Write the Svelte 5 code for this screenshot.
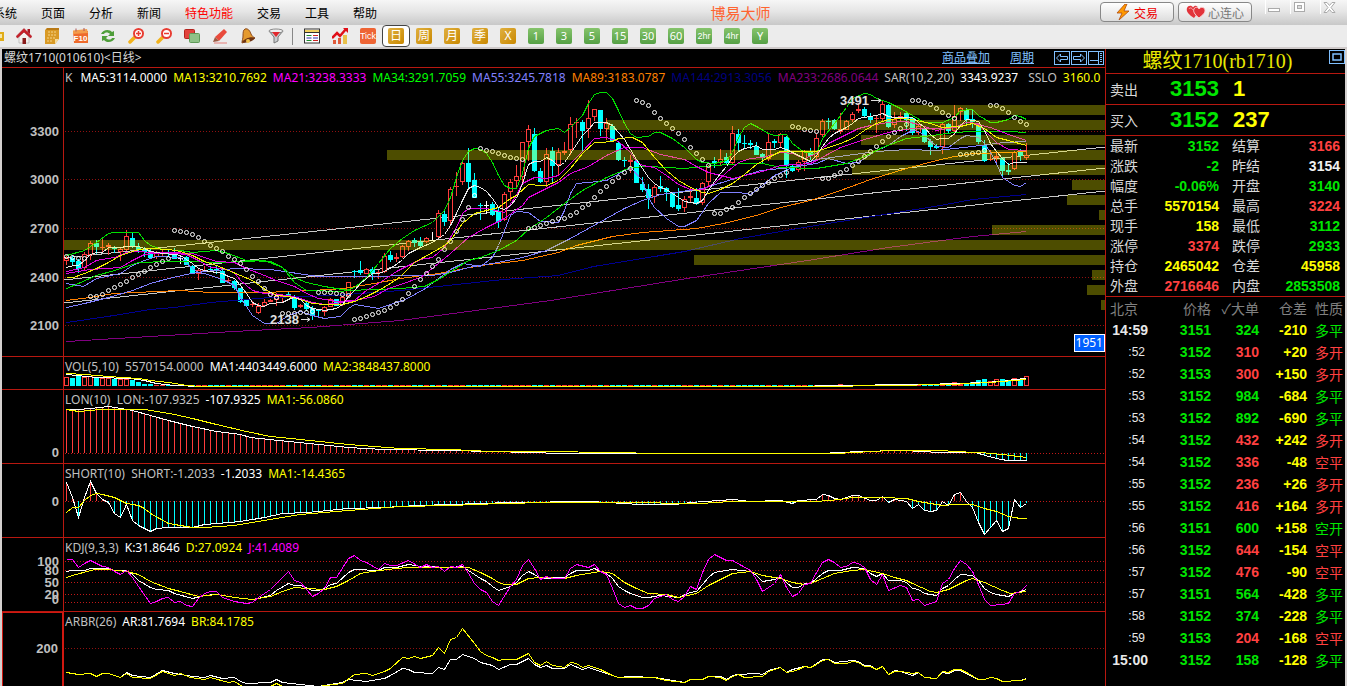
<script>
  const menus = ['系统', '页面', '分析', '新闻', '特色功能', '交易', '工具', '帮助'];
  const periods = [
    ['日', 'gold'], ['周', 'gold'], ['月', 'gold'], ['季', 'gold'], ['X', 'gold'],
    ['1', 'green'], ['3', 'green'], ['5', 'green'], ['15', 'green'], ['30', 'green'],
    ['60', 'green'], ['2hr', 'green'], ['4hr', 'green'], ['Y', 'green']
  ];

  const mainLegend = [
    ['K', '#c0c0c0'], ['MA5:3114.0000', '#fff'], ['MA13:3210.7692', '#ff0'], ['MA21:3238.3333', '#f0f'],
    ['MA34:3291.7059', '#0f0'], ['MA55:3245.7818', '#8080ff'], ['MA89:3183.0787', '#ff8000'],
    ['MA144:2913.3056', '#000080'], ['MA233:2686.0644', '#800080'], ['SAR(10,2,20)', '#c0c0c0'],
    ['3343.9237', '#fff'], ['SSLO', '#c0c0c0'], ['3160.0', '#ff0']
  ];

  const quotes = [
    ['最新', '3152', 'g', '结算', '3166', 'r'],
    ['涨跌', '-2', 'g', '昨结', '3154', 'w'],
    ['幅度', '-0.06%', 'g', '开盘', '3140', 'g'],
    ['总手', '5570154', 'y', '最高', '3224', 'r'],
    ['现手', '158', 'y', '最低', '3112', 'g'],
    ['涨停', '3374', 'r', '跌停', '2933', 'g'],
    ['持仓', '2465042', 'y', '仓差', '45958', 'y'],
    ['外盘', '2716646', 'r', '内盘', '2853508', 'g']
  ];

  const ticks = [
    ['14:59', '3151', '324', 'g', '-210', '多平', 'g'],
    [':52', '3152', '310', 'r', '+20', '多开', 'r'],
    [':52', '3153', '300', 'r', '+150', '多开', 'r'],
    [':53', '3152', '984', 'g', '-684', '多平', 'g'],
    [':53', '3152', '892', 'g', '-690', '多平', 'g'],
    [':54', '3152', '432', 'r', '+242', '多开', 'r'],
    [':54', '3152', '336', 'r', '-48', '空平', 'r'],
    [':55', '3152', '236', 'r', '+26', '多开', 'r'],
    [':55', '3152', '416', 'r', '+164', '多开', 'r'],
    [':56', '3151', '600', 'g', '+158', '空开', 'g'],
    [':56', '3152', '644', 'r', '-154', '空平', 'r'],
    [':57', '3152', '476', 'r', '-90', '空平', 'r'],
    [':57', '3151', '564', 'g', '-428', '多平', 'g'],
    [':58', '3152', '374', 'g', '-228', '多平', 'g'],
    [':59', '3153', '204', 'r', '-168', '空平', 'r'],
    ['15:00', '3152', '158', 'g', '-128', '多平', 'g']
  ];

  // One candle per entry: kind, body top, body bottom, high, low.
  const candles = `r198,201,195,205 c198,202,195,206 c201,209,199,213 r194,208,192,210 r183,195,181,200 c183,187,180,194
r187,188,178,192 r185,187,183,195 c187,189,186,193 r189,192,187,201 r176,190,170,191 c178,187,172,188 c187,190,183,193
c190,192,187,197 c191,198,189,198 r192,197,191,199 r193,194,190,196 c192,194,190,197 c193,199,188,199 w198,199,196,204
c197,205,196,205 c206,214,205,214 r210,214,208,220 r210,211,206,212 c209,210,206,212 c209,211,206,214 c211,223,210,223
r220,221,218,223 c221,228,220,230 c228,242,228,243 c240,246,239,247 r244,245,241,247 r246,253,243,254 r242,246,239,247
r240,242,239,242 r236,240,233,246 r236,237,235,243 c234,236,231,237 c236,248,235,250 r245,247,244,248 c243,249,242,251
c248,256,246,260 c250,251,249,257 r247,252,246,256 r239,247,238,247 c239,246,239,246 r237,245,236,246 r222,236,222,237
c211,212,210,218 c210,213,201,215 r209,214,208,214 c209,214,207,220 r212,213,210,219 r196,212,193,213 c195,200,191,202
r197,199,193,202 r186,197,185,198 r181,187,180,191 c180,183,178,187 c182,186,177,187 r178,182,177,183 w180,181,172,181
r153,177,150,179 c154,162,149,166 r129,161,127,164 r126,127,112,136 r103,122,101,125 c103,122,88,129 c120,138,113,138
c145,146,143,160 w145,146,141,154 c144,155,142,156 c152,162,147,168 r134,160,132,161 r122,132,119,141 r116,121,105,127
r82,117,82,124 r69,82,65,101 c74,111,68,112 c111,122,108,123 r94,122,88,127 c91,106,87,122 r92,105,88,116 r91,93,82,95
r64,90,57,95 r62,63,58,78 c62,71,60,91 r58,69,40,78 r49,57,49,61 c50,69,50,76 r63,69,58,80 c66,81,64,82 c83,100,82,101
c100,101,97,107 r100,102,95,113 c101,123,100,123 c124,130,117,132 c129,138,124,149 r127,137,125,143 c126,129,116,132
c128,132,127,141 c132,147,132,148 c145,149,128,151 r139,148,136,152 r136,138,128,142 c138,144,128,145 r123,143,122,145
r106,122,105,127 c101,103,97,108 r99,103,89,106 c97,103,93,104 r73,103,66,104 c74,83,69,91 c83,84,75,88 c83,85,80,89
c86,95,82,95 c94,98,93,104 r82,99,74,101 c81,83,79,88 r74,83,73,87 c77,106,76,118 c106,111,105,112 r102,110,100,112
r91,102,90,111 c92,96,88,100 r78,97,74,99 r61,75,59,77 c61,62,58,69 c60,69,59,70 r69,72,53,74 r61,70,60,70 r54,60,52,62
r49,51,43,53 c49,56,47,57 c57,60,53,63 r58,59,55,73 r44,59,40,62 c45,67,44,68 r59,65,52,68 r56,57,52,62 c53,60,53,71
c58,73,57,75 r66,73,64,75 c68,82,66,83 c81,87,79,95 c86,88,84,89 r64,87,63,94 c64,71,63,74 r56,71,45,75 r48,52,47,61
c50,60,48,65 c59,62,49,68 c66,82,65,84 c85,101,80,102 r99,100,90,101 r96,98,92,104 c98,111,97,118 c110,112,103,115
r92,109,91,110 c92,96,89,101 r95,98,83,100`.split(/\s+/).map((s) => ({ kind: s[0], v: s.slice(1).split(',').map(Number) }));
  const hue = { r: '#ff3c3c', c: '#00ffff', w: '#ffffff' };
  const barX = (i) => 66 + 6 * i;

  const averages = [
    ['#800080', '66,281 133,277 233,271 310,267 400,260 550,240 693,217 760,207 807,200 888,187 972,176 1026,171'],
    ['#000090', '66,262 107,256 150,249 174,247 210,242 270,237 333,235 400,230 503,219 558,215 593,206 630,200 684,191 740,178 780,171 840,161 890,153 940,145 972,139 1026,134'],
    ['#ff8000', '66,240 90,237 114,233 156,231 180,230 210,232 264,232 312,230 343,228 374,223 400,218 438,213 480,205 522,200 558,192 576,185 612,176 642,172 696,168 723,163 756,155 780,147 810,140 840,130 870,119 906,108 936,100 954,96 973,93 1008,92 1026,91'],
    ['#8080ff', '66,247 84,243 108,237 132,230 150,223 168,218 186,214 204,211 216,210 234,208 270,209 318,216 348,216 432,215 450,212 468,207 492,203 522,197 546,190 570,178 606,158 624,148 642,140 660,134 702,128 738,117 760,110 792,107 816,99 846,95 876,91 906,89 936,90 972,86 1003,82 1026,81'],
    ['#8080ff', '66,223 83,226 96,218 120,213 132,205 144,200 156,196 180,197 186,203 192,208 198,212 204,213 213,216 222,219 234,225 240,237 252,255 264,263 276,263 288,255 300,251 312,255 324,258 340,256 348,248 354,244 366,246 378,248 393,243 405,239 425,228 438,218 450,209 462,203 480,206 492,197 498,185 504,170 510,155 516,151 528,152 540,161 558,162 564,150 570,133 576,123 588,122 606,120 630,107 642,120 648,137 654,147 666,158 678,166 684,166 696,160 708,143 720,132 738,132 750,134 762,125 774,115 792,107 816,103 828,98 846,103 858,102 876,90 888,85 900,76 912,70 918,71 924,75 936,86 948,87 960,78 966,75 978,77 984,83 990,92 996,103 1002,117 1014,125 1020,126 1026,122'],
    ['#00e000', '66,228 78,223 96,215 114,210 138,202 168,201 192,201 216,202 246,201 264,200 282,207 294,217 306,222 324,226 348,230 374,229 400,228 424,226 438,219 468,200 480,197 498,190 516,180 528,169 546,157 564,143 582,130 606,117 630,107 648,106 684,108 714,105 744,103 762,103 780,107 816,108 846,103 864,96 882,87 906,78 924,76 954,72 972,71 1008,71 1026,72'],
    ['#00e000', '66,195 84,190 96,182 108,173 114,172 138,172 144,180 150,185 162,189 180,190 192,192 216,190 228,193 246,200 270,201 282,207 294,222 306,230 342,231 354,227 366,217 378,203 390,188 402,178 414,170 432,162 444,150 450,137 456,117 462,100 468,91 474,88 480,89 486,93 492,102 498,115 504,125 510,128 516,128 522,113 528,88 534,76 546,70 558,68 564,72 570,67 582,55 588,43 594,34 600,32 606,32 612,38 618,50 624,63 630,73 636,77 648,76 654,72 660,72 672,78 684,87 696,99 702,102 714,103 726,100 732,92 738,77 744,67 750,63 756,66 768,73 774,75 786,74 792,83 804,92 816,93 822,78 834,63 846,47 852,38 864,33 870,34 876,38 888,42 900,48 912,55 924,62 942,62 954,57 960,50 972,49 978,55 990,62 996,62 1008,59 1014,55 1020,56 1026,59'],
    ['#e000e0', '66,211 84,207 96,200 114,197 126,192 138,191 150,192 174,193 186,194 198,200 210,207 222,208 234,212 240,220 252,230 264,233 288,235 300,238 312,242 324,244 342,242 354,240 366,230 378,223 396,211 408,205 420,199 432,197 444,187 456,167 462,153 468,148 486,148 504,152 516,135 522,123 534,117 546,118 558,115 570,103 582,91 594,78 606,77 618,81 630,92 636,101 642,105 654,107 666,115 678,124 690,129 702,129 714,123 726,112 738,102 750,98 762,97 780,92 792,93 804,98 816,93 828,83 840,77 858,68 870,65 888,62 906,61 918,64 936,70 954,67 966,62 978,63 984,70 996,82 1008,89 1026,90'],
    ['#e000e0', '66,213 90,209 120,207 132,200 144,194 168,192 192,193 204,197 216,201 234,202 246,208 264,215 276,220 294,226 306,233 318,238 336,241 354,240 374,236 388,228 400,224 420,217 438,203 450,193 468,177 486,167 504,158 522,145 528,137 546,128 558,122 570,113 588,106 606,95 624,87 642,87 660,94 684,99 696,106 708,112 732,118 762,111 780,105 810,103 816,100 840,87 864,79 888,72 912,68 930,68 954,67 972,63 990,67 1008,74 1026,80'],
    ['#f0f000', '66,217 73,217 84,213 96,208 108,202 120,195 132,191 138,189 150,188 168,189 180,191 192,195 204,201 216,205 228,210 240,215 252,220 263,228 276,235 288,236 300,239 312,243 324,244 342,244 354,241 366,236 378,230 390,223 400,216 414,202 432,192 444,185 450,180 462,163 474,153 486,150 498,147 510,138 516,135 528,124 540,125 546,125 558,120 570,108 582,93 594,82 600,82 612,81 618,78 632,77 642,82 654,97 666,110 678,120 690,127 702,132 708,133 720,129 732,123 744,114 756,104 768,97 780,91 792,91 816,91 828,87 840,83 852,78 864,70 876,63 888,59 900,58 912,59 930,63 942,67 960,66 972,63 984,68 996,77 1008,80 1026,85'],
    ['#e8e8e8', '66,207 73,205 78,205 84,200 90,194 96,192 102,192 108,187 114,187 120,187 126,186 138,186 144,188 150,191 162,193 174,194 180,195 186,199 192,203 198,208 204,210 216,212 222,213 228,216 234,218 240,225 246,233 252,242 258,245 263,246 270,243 282,242 290,238 294,237 300,239 306,245 312,248 318,249 324,250 336,248 342,244 348,236 354,230 360,223 366,218 372,213 378,213 384,211 396,204 402,199 408,193 420,187 432,182 438,178 444,174 450,165 456,153 462,140 468,128 474,125 480,127 486,131 492,138 498,147 504,149 510,145 516,138 522,123 528,104 534,101 540,101 546,97 552,100 558,106 564,102 570,93 582,75 588,69 594,62 600,62 606,62 612,65 618,72 624,79 630,89 636,99 642,108 648,117 654,123 660,127 666,129 672,133 678,137 684,141 690,142 696,143 702,140 708,130 714,121 720,113 726,106 732,97 738,91 744,88 750,87 756,85 762,89 774,89 780,87 786,89 792,92 798,95 804,98 810,101 816,95 822,86 828,78 834,73 840,70 846,67 852,63 858,58 870,56 876,55 882,53 888,56 894,57 906,57 912,57 918,62 924,67 930,74 936,79 942,78 948,78 954,73 960,65 966,59 972,60 978,61 984,70 990,83 996,91 1002,98 1008,104 1014,102 1026,102']
  ];

  const sar = [
    196, 197, 198, 198, 236, 236, 234, 230, 227, 224, 221, 217, 214, 211, 207, 204, 201, 198, 170, 171, 172, 174, 177,
    181, 185, 188, 191, 196, 199, 203, 209, 216, 221, 228, 234, 237, 253, 253, 253, 252, 252, 251, 232, 232, 232, 233,
    234, 235, 259, 258, 256, 254, 252, 250, 247, 243, 239, 233, 226, 219, 213, 206, 199, 189, 181, 171, 159, 147, 135,
    88, 90, 91, 93, 95, 97, 98, 99, 168, 167, 165, 163, 161, 158, 158, 155, 152, 147, 144, 137, 131, 126, 121, 117,
    112, 108, 40, 42, 45, 52, 58, 63, 68, 73, 79, 87, 93, 99, 105, 153, 153, 149, 147, 142, 137, 133, 129, 125, 122,
    118, 115, 112, 66, 67, 69, 70, 71, 118, 118, 115, 112, 109, 105, 101, 96, 91, 86, 81, 76, 72, 68, 64, 40, 40, 42,
    44, 48, 52, 55, 58, 94, 94, 93, 92, 90, 45, 45, 48, 52, 57, 61, 64
  ];

  // Turnover by price band: top and length, measured from the right edge.
  const profile = [
    [45, 215], [60, 499], [75, 244], [90, 718], [105, 253], [120, 33], [135, 38],
    [150, 6], [165, 113], [180, 1041], [195, 411], [210, 13], [225, 18], [240, 4]
  ];

  const bigVolume = {
    0: 9, 1: 8, 2: 10, 3: 9, 4: 10, 5: 8, 6: 8, 7: 8, 8: 7, 9: 7, 10: 7, 11: 6, 12: 4, 13: 2, 14: 2,
    129: 2, 136: 2, 146: 2, 148: 4, 149: 2, 150: 3, 151: 4, 152: 6, 153: 7, 154: 5, 155: 7, 156: 7, 157: 6, 158: 8, 159: 6, 160: 10
  };

  function sample(points, x) {
    for (let k = 1; k < points.length; k++) {
      const [x0, y0] = points[k - 1];
      const [x1, y1] = points[k];
      if (x <= x1) return y0 + ((y1 - y0) * (x - x0)) / (x1 - x0);
    }
    return points[points.length - 1][1];
  }

  // Bars between the zero line and the curve, red above it and cyan below.
  function stems(line, zero) {
    const points = line.split(' ').map((p) => p.split(',').map(Number));
    return candles
      .map((_, i) => {
        const y = Math.round(sample(points, barX(i)));
        return y < zero
          ? { x: barX(i), y, h: zero - y, fill: '#ff3c3c' }
          : { x: barX(i), y: zero, h: y - zero, fill: '#00ffff' };
      })
      .filter((s) => s.h > 0);
  }

  const lon = '66,409 78,409 90,408 108,406 132,410 150,415 168,420 192,426 216,431 240,434 250,437 288,441 318,444 348,447 383,449 450,450 530,452 560,453 640,453 820,453 840,452 860,451 900,450 925,451 936,452 975,452 985,455 1000,459 1008,460 1026,460';
  const short = '66,482 72,497 78,517 84,497 90,481 96,493 102,499 108,502 114,513 120,517 126,504 132,520 138,525 144,528 150,531 156,528 168,527 192,527 204,524 217,523 240,521 264,517 282,513 307,512 348,508 383,507 417,505 450,504 510,502 590,501 640,504 675,504 690,502 733,499 750,501 780,500 792,503 798,500 816,499 822,494 828,495 834,498 840,499 852,495 858,495 870,500 876,500 882,496 888,502 894,499 900,500 906,501 912,508 918,504 924,510 930,511 936,510 942,501 948,505 954,494 960,492 966,501 972,507 978,522 984,534 990,527 996,520 1002,531 1008,528 1014,499 1020,507 1026,503';

  const brTail = ' 618,677 654,677 666,680 684,682 690,679 702,679 708,676 720,677 726,680 732,676 738,674 744,677 762,676 768,671 780,667 786,672 792,671 798,669 804,666 810,667 816,664 822,660 828,659 834,663 846,663 852,661 858,662 864,666 870,666 876,669 882,666 888,674 894,671 900,671 912,673 918,672 924,677 936,678 942,671 948,672 954,669 960,669 966,672 978,679 984,679 990,677 996,678 1002,681 1020,680 1026,679';
  const arTail = ' 618,677 630,676 654,677 666,679 684,682 690,679 702,679 708,676 720,676 726,679 732,675 738,674 756,673 762,674 768,670 780,667 786,672 792,669 804,666 810,667 822,659 828,659 834,662 852,660 858,661 864,665 870,665 876,669 882,666 888,674 894,670 900,671 912,675 918,672 924,677 936,678 942,672 948,673 954,670 960,670 966,673 978,679 984,679 990,677 996,678 1002,681 1020,680 1026,678';

  const panels = [
    {
      name: 'vol', top: 357, stems: [],
      legend: [['VOL(5,10)  5570154.0000', '#c0c0c0'], ['MA1:4403449.6000', '#fff'], ['MA2:3848437.8000', '#ff0']],
      labels: [], grid: [],
      lines: [
        ['#fff', '66,374 96,377 130,378 144,380 156,383 174,385 200,386 800,386 830,385 920,384 960,383 1002,381 1014,379 1026,378'],
        ['#ff0', '66,373 84,374 108,376 138,378 150,380 168,382 186,385 200,386 820,386 950,384 990,382 1026,379']
      ]
    },
    {
      name: 'lon', top: 390, stems: stems(lon, 453),
      legend: [['LON(10)  LON:-107.9325', '#c0c0c0'], ['-107.9325', '#fff'], ['MA1:-56.0860', '#ff0']],
      labels: [['0', 453]], grid: [453],
      lines: [
        ['#fff', lon],
        ['#ff0', '66,409 78,411 100,409 144,409 174,414 192,418 216,424 246,431 270,436 300,439 348,444 400,448 450,449 490,451 555,451 600,452 670,453 835,453 890,450 945,450 950,451 980,452 1002,454 1026,457']
      ]
    },
    {
      name: 'short', top: 464, stems: stems(short, 501),
      legend: [['SHORT(10)  SHORT:-1.2033', '#c0c0c0'], ['-1.2033', '#fff'], ['MA1:-14.4365', '#ff0']],
      labels: [['0', 502]], grid: [501],
      lines: [
        ['#fff', short],
        ['#ff0', '66,512 72,507 78,507 84,500 90,495 96,493 102,494 114,497 126,503 138,505 144,508 150,513 168,523 192,527 204,527 234,525 264,520 300,514 348,510 400,506 450,505 500,503 550,502 620,502 700,503 730,501 815,501 840,499 852,497 882,497 906,498 918,501 930,503 942,505 954,504 972,504 984,508 996,511 1008,516 1020,518 1026,518']
      ]
    },
    {
      name: 'kdj', top: 538, stems: [],
      legend: [['KDJ(9,3,3)', '#c0c0c0'], ['K:31.8646', '#fff'], ['D:27.0924', '#ff0'], ['J:41.4089', '#f0f']],
      labels: [['100', 562], ['80', 571], ['50', 583], ['20', 595], ['0', 600]], grid: [561, 570, 582, 594, 602],
      lines: [
        ['#fff', '66,571 72,570 84,570 90,568 108,568 114,570 126,570 132,574 138,580 150,587 156,589 168,590 174,593 192,598 204,595 216,594 234,597 252,599 258,598 270,595 276,590 288,583 294,585 300,585 312,590 318,590 324,588 330,584 336,583 348,572 354,569 378,570 384,567 396,567 408,564 420,566 450,567 462,566 468,570 480,578 486,581 492,586 498,590 504,588 510,586 516,582 522,575 528,571 534,574 540,578 564,577 570,573 576,570 588,570 594,568 600,571 606,573 612,578 618,586 624,590 630,593 636,595 642,597 648,597 660,595 678,597 690,592 696,591 702,584 708,577 714,572 726,570 732,569 750,571 756,575 762,581 774,579 780,577 792,587 798,587 804,583 810,583 816,578 822,573 828,570 840,570 852,567 864,568 870,573 876,576 882,573 888,580 900,580 906,582 912,588 918,589 924,593 936,595 942,588 948,585 954,579 960,574 972,575 978,580 984,588 990,592 996,594 1008,596 1014,593 1020,591 1026,589'],
        ['#ff0', '66,577 72,575 90,570 96,569 108,569 126,571 138,574 150,581 168,588 180,591 198,596 216,594 234,597 252,599 270,596 282,591 294,587 306,588 324,589 336,586 348,580 360,573 372,571 396,568 408,567 450,567 468,567 480,572 492,578 498,582 504,584 516,584 528,578 540,577 564,578 576,575 600,571 612,573 624,582 636,588 648,593 666,594 678,597 696,593 708,585 720,579 732,573 750,571 762,575 780,578 792,582 804,584 810,583 822,578 834,573 852,570 864,569 882,573 894,577 906,580 912,583 930,591 936,592 948,589 960,583 966,580 972,578 984,582 1002,590 1010,593 1026,591'],
        ['#f0f', '66,559 72,559 78,567 84,563 90,560 102,566 108,567 114,571 120,574 126,570 132,577 138,586 150,603 156,601 162,598 168,597 174,602 180,601 186,605 192,606 198,598 204,593 210,591 216,591 222,597 234,601 246,603 252,602 258,597 270,589 276,583 288,571 294,580 300,582 312,596 318,593 324,588 330,577 336,577 348,558 354,555 360,560 366,562 378,569 384,563 390,565 396,565 408,560 420,567 426,564 432,567 438,566 444,571 450,566 456,567 462,564 468,573 474,583 480,589 486,592 492,601 498,605 510,586 516,579 522,565 528,559 534,568 540,579 546,576 552,578 564,578 570,568 576,564 588,567 594,564 600,571 606,574 612,588 618,603 624,607 630,605 636,608 642,608 648,605 654,598 660,596 666,594 672,599 678,601 684,596 690,586 696,589 702,572 708,559 714,554 726,560 732,560 750,570 756,579 762,591 768,587 774,583 780,574 786,587 792,596 798,593 804,584 810,583 816,572 822,562 828,559 834,562 840,567 846,566 852,562 858,563 864,567 870,579 876,584 882,574 888,590 900,585 906,587 912,600 918,599 924,605 936,601 942,583 948,579 954,568 960,560 966,564 972,571 978,584 984,599 990,605 1002,604 1008,603 1014,593 1020,591 1026,585']
      ]
    },
    {
      name: 'arbr', top: 612, stems: [],
      legend: [['ARBR(26)', '#c0c0c0'], ['AR:81.7694', '#fff'], ['BR:84.1785', '#ff0']],
      labels: [['200', 648]], grid: [648],
      lines: [
        ['#fff', '66,672 78,674 90,673 96,676 102,673 108,673 120,677 126,672 132,675 150,677 162,670 174,673 192,676 204,677 210,675 222,678 234,677 240,681 246,683 270,682 276,679 282,682 300,684 318,686 342,682 348,679 366,681 384,678 390,675 402,668 408,669 414,672 432,673 438,667 444,669 450,659 456,659 462,654 474,658 480,662 492,665 498,669 510,664 516,664 528,658 534,664 540,667 546,665 552,668 564,668 570,664 582,669 588,667 600,671' + arTail],
        ['#ff0', '66,672 78,674 90,673 96,676 102,673 108,673 120,677 126,673 132,677 150,678 162,671 174,675 180,673 190,677 204,679 210,677 228,682 234,681 242,686 270,686 276,683 282,686 318,686 342,683 354,674 366,673 372,675 384,671 390,668 402,657 408,658 414,656 420,658 432,655 438,647 444,653 450,639 456,637 462,628 474,643 480,651 486,655 492,657 498,660 504,659 516,659 528,653 534,662 540,665 546,661 552,665 564,667 570,662 576,663 582,667 588,665 600,669 612,675' + brTail]
      ]
    }
  ];
</script>

<div class="app">
  <header class="menubar">
    <nav>
      {#each menus as m}
        <button class="menu" class:hot={m === '特色功能'}>{m}</button>
      {/each}
    </nav>
    <h1>博易大师</h1>
    <div class="right">
      <button class="pill trade">
        <svg width="14" height="16" viewBox="0 0 14 16"><path d="M9 0 1 9h5L3 16l10-9H8l3-7z" fill="#f90" stroke="#b04a10" stroke-width=".8" /></svg>
        交易
      </button>
      <button class="pill hearts">
        <svg width="20" height="14" viewBox="0 0 20 14">
          <path d="M8 13C2 9 0 6 1 3c1-3 5-3 6-.5C9-.5 12 1 12 4c0 4-2 6-4 9z" fill="#e2333a" />
          <path d="M3 4c1-2 3-1 4 1" fill="none" stroke="#f7b0b0" />
          <path d="M13 13c-5-4-6-7-5-9 1-2.500 4-2 5 0 2-3 6-1.500 6 1.500 0 3-3 5-6 7.500z" fill="#e2333a" stroke="#fbd5d5" />
        </svg>
        心连心
      </button>
      <div class="win">
        <button aria-label="最小化"><svg width="13" height="13"><rect x=".5" y="7.500" width="11" height="3" fill="#fff" stroke="#aaa" /></svg></button>
        <button aria-label="最大化"><svg width="13" height="13"><rect x="1.500" y="1.500" width="10" height="9" fill="#fff" stroke="#aaa" /><rect x="4.500" y="4.500" width="4" height="3" fill="#ddd" stroke="#aaa" /></svg></button>
        <button class="close" aria-label="关闭"><svg width="13" height="13"><path d="M1 1.500h3l2.500 3 2.500-3h3l-4 5 4 5H9l-2.500-3-2.500 3H1l4-5z" fill="#fff" stroke="#aaa" /></svg></button>
      </div>
    </div>
  </header>

  <div class="toolbar">
    <button class="tool edge" aria-label="返回"><svg width="10" height="16" viewBox="0 0 10 16"><path d="M0 4h4v9H0z" fill="#e0ac18" /><path d="M0 6h2v4H0z" fill="#f6e7a8" /></svg></button>
    <button class="tool" aria-label="首页"><svg width="16" height="16" viewBox="0 0 16 16"><path d="M3 8v7h10V8L8 4z" fill="#f4f0ee" stroke="#aaa" stroke-width=".6" /><path d="M6.500 10h3.500v6H6.500z" fill="#8a1c1c" /><path d="M0 8.500 8 .5l8 8-1.500 1.500L8 4 1.500 10z" fill="#c81e28" stroke="#a01018" stroke-width=".5" /><path d="M11.500 1h2.500v5l-2.500-2z" fill="#a61620" /></svg></button>
    <button class="tool" aria-label="笔记"><svg width="16" height="16" viewBox="0 0 16 16"><path d="M3 0h12v11l-4 5H1V2z" fill="#d99a26" /><path d="M3 0h12v2H2z" fill="#b97a16" /><path d="M4 4h9M4 7h9M3 10h8M3 13h5" stroke="#f5d58a" stroke-dasharray="2 1" /><path d="M15 11h-4v5z" fill="#f5dc9d" /></svg></button>
    <button class="tool" aria-label="F10"><svg width="17" height="16" viewBox="0 0 17 16"><path d="M1 3h15v12H2z" fill="#ee6a2c" /><path d="M1 2.500 15 1l1 4L1 6z" fill="#f49c4c" /><path d="M4 .5v3M12 0v3" stroke="#a55" /><text x="8.500" y="13" class="fz">F10</text></svg></button>
    <button class="tool" aria-label="刷新"><svg width="16" height="16" viewBox="0 0 16 16"><path d="M1 6c2-5 9-5 11-2l2-1v5H8l2-2C8 4 5 4 4 6zM15 10c-2 5-9 5-11 2l-2 1V8h6l-2 2c2 2 5 2 6 0z" fill="#4f9e3a" /></svg></button>
    <button class="tool" aria-label="放大"><svg width="17" height="16" viewBox="0 0 17 16"><path d="m2 14 4.500-4.500" stroke="#f2b21c" stroke-width="3.500" stroke-linecap="round" /><circle cx="10.500" cy="5.500" r="4.500" fill="#fff" stroke="#e83c32" stroke-width="2" /><path d="M8 5.500h5M10.500 3v5" stroke="#e83c32" stroke-width="1.500" /></svg></button>
    <button class="tool" aria-label="缩小"><svg width="17" height="16" viewBox="0 0 17 16"><path d="m2 14 4.500-4.500" stroke="#f2b21c" stroke-width="3.500" stroke-linecap="round" /><circle cx="10.500" cy="5.500" r="4.500" fill="#fff" stroke="#e83c32" stroke-width="2" /><path d="M8 5.500h5" stroke="#e83c32" stroke-width="1.500" /></svg></button>
    <button class="tool" aria-label="叠加"><svg width="16" height="16" viewBox="0 0 16 16"><rect x=".5" y="1.500" width="10" height="9" rx="1" fill="#e2433c" stroke="#b3241f" /><rect x="5.500" y="5.500" width="10" height="9" rx="1" fill="#8fc287" stroke="#5f9a58" /></svg></button>
    <button class="tool" aria-label="画线"><svg width="16" height="16" viewBox="0 0 16 16"><path d="M2 15h13" stroke="#e9a3a0" stroke-width="1.500" /><path d="m3 9 9-8 3 3-8 9z" fill="#e94a3c" /><path d="m3 9 4 4-6 1z" fill="#9c5a43" /></svg></button>
    <button class="tool" aria-label="预警"><svg width="16" height="16" viewBox="0 0 16 16"><path d="M5 1c3-1 5 2 6 5 1 2 2 3 4 4L2 15c0-3 1-4 1-7S3 2 5 1z" fill="#e59a2e" stroke="#8c4a1c" /><path d="M2 14c2-3 9-6 13-4-1 3-10 6-13 4z" fill="#6f3413" /><circle cx="8" cy="13" r="2" fill="#f4c24c" /></svg></button>
    <button class="tool" aria-label="筛选"><svg width="16" height="16" viewBox="0 0 16 16"><path d="m1 3 5 6v6l4-2V9l5-6z" fill="#c9cdd0" stroke="#777" /><ellipse cx="8" cy="3" rx="7" ry="2" fill="#eee" stroke="#888" /><path d="M4 4h8L8 9z" fill="#e2282e" /></svg></button>
    <span class="sep"></span>
    <button class="tool" aria-label="报价"><svg width="16" height="16" viewBox="0 0 16 16"><rect x=".5" y="1" width="15" height="14" fill="#fff" stroke="#333" /><path d="M1 3h14" stroke="#f0d060" stroke-width="2" /><path d="M1 4.500h14" stroke="#333" /><path d="M2.500 7.500h5M2.500 12.500h5" stroke="#1a8a2a" /><path d="M2.500 10h5M9 10h5" stroke="#2a2ab0" /><path d="M9 7.500h5M9 12.500h5" stroke="#c22" /></svg></button>
    <button class="tool" aria-label="走势"><svg width="16" height="16" viewBox="0 0 16 16"><path d="M1 12h3v4H1zM6 10h3v6H6z" fill="#e05a3a" /><path d="M11 7h4v9h-4z" fill="#e8c14a" /><path d="m0 10 5-5 3 3 6-7" fill="none" stroke="#e00f18" stroke-width="2.500" /><path d="M11 0h5v5z" fill="#e00f18" /></svg></button>
    <button class="chip tick"><b>Tick</b></button>
    {#each periods as [label, tone], i}
      <button class="chip {tone}" class:selected={i === 0} class:long={label.length > 2}><b>{label}</b></button>
    {/each}
  </div>

  <main>
    <section class="charts">
      <div class="caption">
        <span>螺纹1710(010610)&lt;日线&gt;</span>
        <div class="links">
          <a href="#overlay">商品叠加</a>
          <a href="#period">周期</a>
          <span class="nav">
            <button aria-label="左移"><svg width="14" height="12"><path d="m1.500 6 4-4v2.500h7v3h-7V10z" fill="none" stroke="#80c0ff" /></svg></button>
            <button aria-label="右移"><svg width="14" height="12"><path d="m12.500 6-4-4v2.500h-7v3h7V10z" fill="none" stroke="#80c0ff" /></svg></button>
            <button aria-label="布局"><svg width="14" height="12"><path d="M1 8.500h9M9.500 0v12" stroke="#80c0ff" /><path d="M12 1v10" stroke="#80c0ff" stroke-width="2" stroke-dasharray="1 1" /></svg></button>
          </span>
        </div>
      </div>

      <div class="panel price">
        <div class="axis">
          {#each [['3300', 64], ['3000', 112], ['2700', 161], ['2400', 210], ['2100', 258]] as [t, y]}
            <span style="top:{y}px">{t}</span>
          {/each}
        </div>
        <div class="plot">
          <div class="legend">
            {#each mainLegend as [t, c]}<span style="color:{c}">{t}</span>{/each}
          </div>
          <svg width="100%" height="100%">
            {#each [63, 111, 160, 209, 257] as y}
              <line x1="1" x2="100%" y1={y + 0.5} y2={y + 0.5} class="dots" />
            {/each}
            <g transform="translate(-64 -8)">
              <path d="M64 198 1105 87M64 220 1105 108M64 243 1105 131" stroke="#c8c8c8" class="crisp" />
              {#each candles as { kind, v }, i}
                <path d="M{barX(i) + 0.5} {v[2]}V{v[3]}" stroke={hue[kind]} />
                {#if kind === 'r' && v[1] - v[0] > 1}
                  <rect x={barX(i) - 1.5} y={v[0] + 0.5} width="4" height={v[1] - v[0] - 1} fill="#000" stroke={hue.r} />
                {:else}
                  <rect x={barX(i) - 2} y={v[0]} width="5" height={Math.max(1, v[1] - v[0])} fill={hue[kind]} />
                {/if}
              {/each}
              {#each averages as [c, pts]}
                <polyline points={pts} stroke={c} fill="none" transform="translate(.5 .5)" class="crisp" />
              {/each}
              {#each sar as y, i}
                <circle cx={barX(i) + 0.5} cy={y + 0.5} r="2" fill="none" stroke="#fff" />
              {/each}
            </g>
            <svg x="100%" overflow="visible">
              {#each profile as [y, w]}
                <rect x={-w} y={y - 8} width={w} height="10" fill="#ff0" fill-opacity=".3" />
              {/each}
            </svg>
            <text x="206" y="256" class="mark">2138</text>
            <path d="M237 251.500h9m-3-2 3 2-3 2" stroke="#ddd" fill="none" />
            <text x="776" y="37" class="mark">3491</text>
            <path d="M807 32.500h10m-3-2 3 2-3 2" stroke="#ddd" fill="none" />
          </svg>
          <span class="cursor">1951</span>
        </div>
      </div>

      {#each panels as p}
        <div class="panel {p.name}">
          <div class="axis">
            {#each p.labels as [t, y]}<span style="top:{y - p.top}px">{t}</span>{/each}
          </div>
          <div class="plot">
            <div class="legend">
              {#each p.legend as [t, c]}<span style="color:{c}">{t}</span>{/each}
            </div>
            <svg width="100%" height="100%">
              {#each p.grid as y}
                <line x1="1" x2="100%" y1={y - p.top + 0.5} y2={y - p.top + 0.5} class="dots" />
              {/each}
              <g transform="translate(-64 {-p.top})">
                {#if p.name === 'vol'}
                  {#each candles as { kind }, i}
                    {@const h = bigVolume[i] ?? 1}
                    {#if kind === 'r' && h > 2}
                      <rect x={barX(i) - 1.5} y={386.5 - h} width="4" height={h - 1} fill="none" stroke={hue.r} />
                    {:else}
                      <rect x={barX(i) - 2} y={386 - h} width="5" height={h} fill={kind === 'r' ? hue.r : hue.c} />
                    {/if}
                  {/each}
                {/if}
                {#each p.stems as s}
                  <rect x={s.x} y={s.y} width="1" height={s.h} fill={s.fill} />
                {/each}
                {#each p.lines as [c, pts]}
                  <polyline points={pts} stroke={c} fill="none" transform="translate(.5 .5)" class="crisp" />
                {/each}
              </g>
            </svg>
          </div>
        </div>
      {/each}
    </section>

    <aside>
      <div class="name">
        <h2>螺纹1710(rb1710)</h2>
        <button aria-label="窗口"><svg width="16" height="14"><rect x=".5" y=".5" width="15" height="13" fill="none" stroke="#80c0ff" /><rect x="4" y="4" width="8" height="6" fill="none" stroke="#80c0ff" stroke-width="1.500" /></svg></button>
      </div>
      <div class="deal"><span>卖出</span><b class="g">3153</b><b class="y">1</b></div>
      <div class="deal"><span>买入</span><b class="g">3152</b><b class="y">237</b></div>
      <table class="quotes">
        <tbody>
          {#each quotes as [a, b, bc, c, d, dc]}
            <tr><th scope="row">{a}</th><td class={bc}>{b}</td><th scope="row">{c}</th><td class={dc}>{d}</td></tr>
          {/each}
        </tbody>
      </table>
      <table class="ticks">
        <thead><tr><th>北京</th><th>价格</th><th>✓大单</th><th>仓差</th><th>性质</th></tr></thead>
        <tbody>
          {#each ticks as [t, price, lot, lc, diff, kind, kc]}
            <tr>
              <td class="time" class:full={t.length > 3}>{t}</td>
              <td class="g">{price}</td><td class={lc}>{lot}</td><td class="y">{diff}</td><td class="kind {kc}">{kind}</td>
            </tr>
          {/each}
        </tbody>
      </table>
    </aside>
  </main>
</div>

<style>
  :global(body) { margin: 0; background: #000; }
  .app { min-height: 100vh; display: flex; flex-direction: column; overflow: hidden; background: #d4d0cf; font-family: "Noto Sans", "Noto Sans CJK SC", sans-serif; font-size: 12px; }
  button { border: 0; margin: 0; padding: 0; background: none; font: inherit; color: inherit; display: flex; align-items: center; justify-content: center; }
  h1, h2 { margin: 0; font-weight: 400; }
  svg { display: block; }
  .crisp { shape-rendering: crispEdges; }

  .menubar { height: 25px; display: grid; grid-template-columns: 1fr auto 1fr; align-items: center; background: linear-gradient(#f6f6f6, #e6e6e6 45%, #c8c8c8); font-family: "Noto Sans CJK SC", sans-serif; }
  nav { display: flex; gap: 24px; margin-left: -7px; }
  .menu { white-space: nowrap; color: #000; }
  .menu.hot { color: #f00; }
  h1 { font-size: 15px; line-height: 25px; color: #ff6430; padding-left: 134px; }
  .right { display: flex; justify-content: flex-end; align-items: flex-start; gap: 4px; height: 25px; padding-right: 9px; }
  .pill { box-sizing: border-box; width: 74px; height: 20px; margin-top: 2px; gap: 4px; border: 1px solid #888; border-radius: 4px; background: linear-gradient(#fff, #ddd); }
  .trade { color: #e00; }
  .hearts { color: #777; gap: 2px; }
  .win { display: flex; margin-left: 9px; gap: 7px; }
  .win button { width: 18px; height: 14px; border-left: 1px solid #fff; }
  .win .close { margin-left: 5px; }

  .toolbar { height: 22px; display: flex; align-items: center; background: #ececec; border-bottom: 2px solid #cfcaca; }
  .tool, .chip { width: 28px; height: 20px; flex: none; }
  .tool.edge { width: 10px; overflow: hidden; }
  .sep { width: 1px; height: 17px; background: #888; margin: 0 5px 0 2px; }
  .fz { font: bold 8px "Liberation Sans", sans-serif; fill: #fff; text-anchor: middle; }
  .chip b { width: 16px; height: 16px; border-radius: 2px; display: flex; align-items: center; justify-content: center; color: #fff; font: 12px/16px "Noto Sans", "Noto Sans CJK SC", sans-serif; }
  .gold b { background: linear-gradient(135deg, #e0b040, #c98800); }
  .green b { background: linear-gradient(#86c46c, #55a045); font-size: 11px; }
  .chip.long b, .chip.tick b { font: 9px/16px "Liberation Sans", sans-serif; }
  .chip.tick b { background: #ee6434; }
  .chip.selected { box-sizing: border-box; background: #fff; border: 1px solid #444; border-radius: 4px; height: 22px; }

  main { flex: 1; display: grid; grid-template-columns: minmax(0, 1fr) 240px; padding: 0 2px; }
  .charts { display: flex; flex-direction: column; background: #000; min-width: 0; }
  .caption { height: 18px; display: flex; align-items: center; justify-content: space-between; color: #d8d8d8; border-bottom: 1px solid #b81810; padding-left: 2px; line-height: 18px; }
  .links { display: flex; gap: 20px; }
  a { color: #80c0ff; text-decoration: underline; }
  .nav { display: flex; gap: 1px; align-items: center; margin-right: 1px; }
  .nav button { border: 1px solid #80c0ff; box-sizing: border-box; width: 16px; height: 14px; }

  .panel { display: grid; grid-template-columns: 62px minmax(0, 1fr); border-bottom: 1px solid #b81810; box-sizing: border-box; }
  .price { height: 289px; }
  .vol { height: 33px; }
  .lon, .short, .kdj { height: 74px; }
  .arbr { flex: 1; min-height: 74px; border-bottom: 0; }
  .axis { border-right: 1px solid #b81810; position: relative; color: #c0c0c0; font: bold 13px/14px "Liberation Sans", sans-serif; }
  .axis span { position: absolute; right: 4px; transform: translateY(-50%); }
  .arbr .axis { border: 1px solid #d01810; border-width: 1px 2px 0 1px; }
  .plot { position: relative; overflow: hidden; }
  .plot > svg { position: absolute; inset: 0; }
  .legend { display: flex; gap: 6px; white-space: pre; line-height: 20px; padding-left: 1px; }
  .price .legend span:first-child { margin-right: 2px; }
  .price .legend span:nth-child(12) { margin-left: 4px; }
  .dots { stroke: #c01818; stroke-dasharray: 1 2; }
  .price .dots, .arbr .dots { stroke: #901010; }
  .mark { font: bold 13px "Liberation Sans", sans-serif; fill: #e0e0e0; }
  .cursor { position: absolute; right: 0; bottom: 4px; box-sizing: border-box; border: 1px solid #fff; background: #0060ff; color: #fff; padding: 0 1px; line-height: 16px; font-size: 12px; }

  aside { background: #000; border-left: 1px solid #b81810; color: #d8d8d8; font: 14px "Noto Sans CJK SC", sans-serif; }
  .name { height: 24px; display: flex; justify-content: space-between; border-bottom: 1px solid #b81810; }
  h2 { flex: 1; text-align: center; color: #e8e800; font: 20px/24px "Liberation Serif", "Noto Sans CJK SC", serif; }
  .name button { align-self: flex-start; margin-top: 1px; }
  .deal { height: 30px; display: grid; grid-template-columns: 36px 73px 1fr; align-items: center; padding-left: 4px; border-bottom: 1px solid #b81810; }
  .deal b { font: bold 22px/30px "Liberation Sans", sans-serif; text-align: right; }
  .deal b:last-child { text-align: left; padding-left: 14px; }
  .g { color: #00e600; }
  .y { color: #ff0; }
  .r { color: #ff4040; }
  .w { color: #f0f0f0; }
  table { border-collapse: collapse; width: 100%; table-layout: fixed; }
  th { font-weight: 400; padding: 0; }
  td { padding: 0; text-align: right; font: bold 14px/20px "Liberation Sans", sans-serif; }
  .quotes { border-bottom: 1px solid #b81810; }
  .quotes tr { height: 20px; }
  .quotes th { width: 32px; text-align: left; padding-left: 4px; line-height: 18px; vertical-align: top; }
  .quotes td:nth-child(2) { width: 77px; padding-right: 9px; }
  .quotes td:last-child { padding-right: 5px; }
  .ticks tr { height: 22px; line-height: 22px; }
  .ticks thead th { color: #808080; text-align: right; white-space: nowrap; }
  .ticks th:first-child { width: 41px; text-align: left; padding-left: 4px; }
  .ticks th:nth-child(2) { width: 60px; }
  .ticks th:nth-child(3) { width: 48px; }
  .ticks th:nth-child(4) { width: 48px; }
  .ticks th:last-child { padding-right: 2px; }
  .ticks .time { font-weight: 400; font-size: 12px; color: #e8e8e8; padding-right: 6px; }
  .ticks .time.full { font-weight: 700; font-size: 14px; padding-right: 3px; }
  .ticks .kind { font: 14px "Noto Sans CJK SC", sans-serif; padding-right: 2px; }
</style>
